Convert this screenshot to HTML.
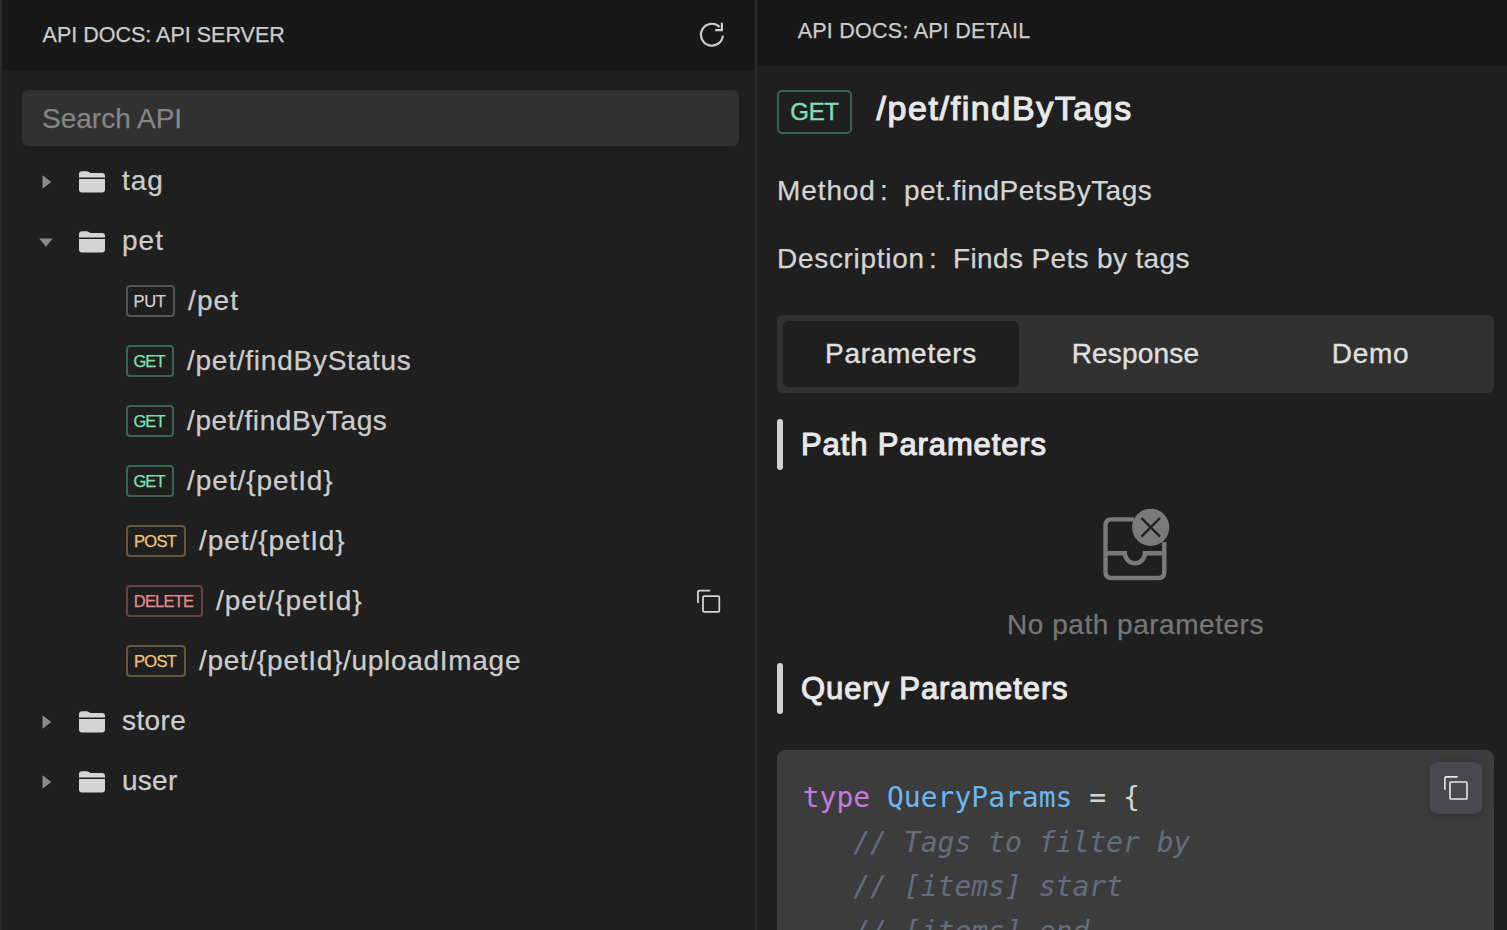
<!DOCTYPE html>
<html lang="en">
<head>
<meta charset="utf-8">
<title>API Docs</title>
<style>
*{box-sizing:border-box;margin:0;padding:0}
html,body{-webkit-text-stroke-width:0.25px;width:1507px;height:930px;overflow:hidden;background:#1f1f1f;font-family:"Liberation Sans",sans-serif;color:#cccccc}
.abs{position:absolute}
#left{position:absolute;left:0;top:0;width:755px;height:930px;background:#1f1f1f;border-left:2px solid #2b2b2b}
#divider{position:absolute;left:755px;top:0;width:2px;height:930px;background:#2b2b2b}
#right{position:absolute;left:757px;top:0;width:750px;height:930px;background:#1f1f1f}
.hdr{position:absolute;left:0;top:0;width:100%;background:#181818;color:#cccccc;font-size:21.5px;white-space:nowrap}
#left .hdr{height:70px;line-height:71.4px;padding-left:40.6px;letter-spacing:0px}
#right .hdr{height:66px;line-height:62.6px;padding-left:40.7px;letter-spacing:0.25px}
#search{position:absolute;left:20px;top:90px;width:717px;height:56px;border-radius:6px;background:#313131;color:#858585;font-size:28px;line-height:57px;padding-left:20px}
.row{position:absolute;left:0;height:60px;width:753px;line-height:60px;font-size:28px;color:#cccccc;white-space:nowrap}
.row .lbl{position:absolute;left:120px;top:0px}
.row svg{position:absolute}
.badge{position:absolute;left:124px;top:14px;height:32px;border:2px solid #555;border-radius:4px;font-size:16.5px;line-height:28px;text-align:center;padding-right:2px}
.get{border-color:#396455;color:#7fe0b6}
.post{border-color:#65563b;color:#efc777}
.del{border-color:#654444;color:#e88b8b}
.put{border-color:#545454;color:#d0d0d0}
.path{position:absolute;top:0px}

#right .gbadge{-webkit-text-stroke:0.4px #7fe0b6;position:absolute;left:20px;top:90px;width:75px;height:44px;border:2px solid #396455;border-radius:5px;color:#7fe0b6;font-size:24px;line-height:40.5px;text-align:center;letter-spacing:-0.3px}
#right .title{position:absolute;left:119px;top:84px;font-size:34px;line-height:48px;font-weight:normal;-webkit-text-stroke:1.15px #e8e8e8;color:#e8e8e8;white-space:nowrap}
.kv{position:absolute;font-size:28px;line-height:40px;white-space:nowrap;color:#d4d4d4}
#tabs{position:absolute;left:20px;top:315px;width:717px;height:78px;border-radius:6px;background:#313131}
#tabs .tab{-webkit-text-stroke:0.35px #e0e0e0;position:absolute;top:6px;width:235px;height:66px;line-height:66px;text-align:center;font-size:28px;color:#e0e0e0;border-radius:6px;white-space:nowrap}
#tabs .tab.on{background:#1f1f1f;width:236px}
.sec{position:absolute;left:20px;height:50px;width:700px}
.sec i{position:absolute;left:0;top:0;width:6px;height:51px;border-radius:3px;background:#d2d2d2}
.sec span{position:absolute;left:24px;top:1px;line-height:50px;font-size:31px;font-weight:normal;-webkit-text-stroke:1.1px #e8e8e8;color:#e8e8e8;white-space:nowrap}
#empty{position:absolute;left:20px;width:717px;top:605px;text-align:center;font-size:28px;line-height:40px;color:#767676;white-space:nowrap;letter-spacing:0.52px}
#code{position:absolute;left:20px;top:750px;width:717px;height:200px;border-radius:8px;background:#3c3c3c}
#code pre{-webkit-text-stroke-width:0;position:absolute;left:25.7px;top:26px;font-family:"DejaVu Sans Mono","Liberation Mono",monospace;font-size:28px;line-height:44.6px;color:#d4d4d4;white-space:pre}
#code .k{color:#c678dd}#code .t{color:#6cb6f2}#code .c{color:#656d7c;font-style:italic}
#copyb{position:absolute;left:653px;top:12px;width:52px;height:52px;border-radius:7px;background:#49484e;box-shadow:0 2px 10px rgba(0,0,0,.18)}
</style>
</head>
<body>
<div id="left">
  <div class="hdr">API DOCS: API SERVER</div>
  <svg class="abs" style="left:696px;top:21px" width="28" height="28" viewBox="0 0 28 28" fill="none" stroke="#cccccc" stroke-width="2.2"><path d="M24.85 14.5A10.95 10.95 0 1 1 21.6 5.9"/><path d="M23.9 1.7V9.1H17.2" stroke-linejoin="miter"/></svg>
  <div id="search">Search API</div>
  <div id="tree">
<div class="row" style="top:151px"><svg style="left:40px;top:24px" width="10" height="14" viewBox="0 0 10 14"><path d="M0.5 0.3L9.3 7L0.5 13.7Z" fill="#8a8a8a"/></svg><svg style="left:77px;top:20px" width="26" height="22" viewBox="0 0 26 22"><path d="M0 3.2Q0 0.2 3 0.2H7.2Q9 0.2 10.2 1.2Q11.3 2.1 13 2.1H23Q26 2.1 26 5V6.6H0Z" fill="#d4d4d4"/><path d="M0 7.9H26V18.6Q26 21.6 23 21.6H3Q0 21.6 0 18.6Z" fill="#d4d4d4"/></svg><span class="lbl" style="letter-spacing:1.0px">tag</span></div>
<div class="row" style="top:211px"><svg style="left:37px;top:27px" width="14" height="9" viewBox="0 0 14 9"><path d="M0.3 0.4H13.7L7 8.8Z" fill="#8a8a8a"/></svg><svg style="left:77px;top:20px" width="26" height="22" viewBox="0 0 26 22"><path d="M0 3.2Q0 0.2 3 0.2H7.2Q9 0.2 10.2 1.2Q11.3 2.1 13 2.1H23Q26 2.1 26 5V6.6H0Z" fill="#d4d4d4"/><path d="M0 7.9H26V18.6Q26 21.6 23 21.6H3Q0 21.6 0 18.6Z" fill="#d4d4d4"/></svg><span class="lbl" style="letter-spacing:1.0px">pet</span></div>
<div class="row" style="top:271px"><span class="badge put" style="width:49px;letter-spacing:-0.3px">PUT</span><span class="path" style="left:186px;letter-spacing:1.1px">/pet</span></div>
<div class="row" style="top:331px"><span class="badge get" style="width:48px;letter-spacing:-0.9px">GET</span><span class="path" style="left:185px;letter-spacing:0.76px">/pet/findByStatus</span></div>
<div class="row" style="top:391px"><span class="badge get" style="width:48px;letter-spacing:-0.9px">GET</span><span class="path" style="left:185px;letter-spacing:0.6px">/pet/findByTags</span></div>
<div class="row" style="top:451px"><span class="badge get" style="width:48px;letter-spacing:-0.9px">GET</span><span class="path" style="left:185px;letter-spacing:0.93px">/pet/{petId}</span></div>
<div class="row" style="top:511px"><span class="badge post" style="width:60px;letter-spacing:-0.7px">POST</span><span class="path" style="left:197px;letter-spacing:0.93px">/pet/{petId}</span></div>
<div class="row" style="top:571px"><span class="badge del" style="width:77px;letter-spacing:-0.8px">DELETE</span><span class="path" style="left:214px;letter-spacing:0.93px">/pet/{petId}</span><svg style="left:694.5px;top:18.3px" width="24" height="24" viewBox="0 0 24 24" fill="none" stroke="#d6d6d6" stroke-width="1.75"><rect x="6" y="7" width="16.3" height="15.9" rx="1.2"/><path d="M0.95 13.9V3Q0.95 1.6 2.4 1.6H13.2"/></svg></div>
<div class="row" style="top:631px"><span class="badge post" style="width:60px;letter-spacing:-0.7px">POST</span><span class="path" style="left:197px;letter-spacing:0.71px">/pet/{petId}/uploadImage</span></div>
<div class="row" style="top:691px"><svg style="left:40px;top:24px" width="10" height="14" viewBox="0 0 10 14"><path d="M0.5 0.3L9.3 7L0.5 13.7Z" fill="#8a8a8a"/></svg><svg style="left:77px;top:20px" width="26" height="22" viewBox="0 0 26 22"><path d="M0 3.2Q0 0.2 3 0.2H7.2Q9 0.2 10.2 1.2Q11.3 2.1 13 2.1H23Q26 2.1 26 5V6.6H0Z" fill="#d4d4d4"/><path d="M0 7.9H26V18.6Q26 21.6 23 21.6H3Q0 21.6 0 18.6Z" fill="#d4d4d4"/></svg><span class="lbl" style="letter-spacing:0.4px">store</span></div>
<div class="row" style="top:751px"><svg style="left:40px;top:24px" width="10" height="14" viewBox="0 0 10 14"><path d="M0.5 0.3L9.3 7L0.5 13.7Z" fill="#8a8a8a"/></svg><svg style="left:77px;top:20px" width="26" height="22" viewBox="0 0 26 22"><path d="M0 3.2Q0 0.2 3 0.2H7.2Q9 0.2 10.2 1.2Q11.3 2.1 13 2.1H23Q26 2.1 26 5V6.6H0Z" fill="#d4d4d4"/><path d="M0 7.9H26V18.6Q26 21.6 23 21.6H3Q0 21.6 0 18.6Z" fill="#d4d4d4"/></svg><span class="lbl" style="letter-spacing:0.25px">user</span></div>
</div>
</div>
<div id="divider"></div>
<div id="right">
  <div class="hdr">API DOCS: API DETAIL</div>
  <div class="gbadge">GET</div>
  <div class="title" style="letter-spacing:1.6px;left:119.5px">/pet/findByTags</div>
  <div class="kv" style="left:20px;top:171.4px;letter-spacing:0.9px">Method</div><div class="kv" style="left:123px;top:171.4px">:</div><div class="kv" style="left:147px;top:171.4px;letter-spacing:0.47px">pet.findPetsByTags</div>
  <div class="kv" style="left:20px;top:239.4px;letter-spacing:0.7px">Description</div><div class="kv" style="left:172px;top:239.4px">:</div><div class="kv" style="left:196px;top:239.4px;letter-spacing:0.36px">Finds Pets by tags</div>
  <div id="tabs"><div class="tab on" style="left:6px;letter-spacing:0.73px">Parameters</div><div class="tab" style="left:241px;letter-spacing:0.2px">Response</div><div class="tab" style="left:476px;letter-spacing:0.7px">Demo</div></div>
  <div class="sec" style="top:419px"><i></i><span style="letter-spacing:0.89px">Path Parameters</span></div>
  <svg class="abs" style="left:343px;top:506px" width="74" height="78" viewBox="0 0 74 78" fill="none"><path d="M5.5 47.3H24.9A10 10 0 0 0 44.9 47.3H64.3" stroke="#7a7a7a" stroke-width="4.4"/><path d="M34 13.4H11.5Q5.5 13.4 5.5 19.4V66Q5.5 72 11.5 72H58.3Q64.3 72 64.3 66V36" stroke="#7a7a7a" stroke-width="4.4"/><circle cx="50.7" cy="21.3" r="18.6" fill="#7a7a7a"/><path d="M41.4 12L60 30.6M60 12L41.4 30.6" stroke="#1f1f1f" stroke-width="2.4"/></svg>
  <div id="empty">No path parameters</div>
  <div class="sec" style="top:663px"><i></i><span style="letter-spacing:0.89px">Query Parameters</span></div>
  <div id="code"><pre><span class="k">type</span> <span class="t">QueryParams</span> = {
<span class="c">   // Tags to filter by</span>
<span class="c">   // [items] start</span>
<span class="c">   // [items] end</span></pre>
    <div id="copyb"><svg class="abs" style="left:13.5px;top:13.8px" width="24" height="24" viewBox="0 0 24 24" fill="none" stroke="#e8e8e8" stroke-width="1.6"><rect x="6" y="6" width="17" height="17" rx="1.1"/><path d="M0.9 13.8V2.4Q0.9 0.9 2.4 0.9H13.6"/></svg></div>
  </div>
</div>
</body>
</html>
